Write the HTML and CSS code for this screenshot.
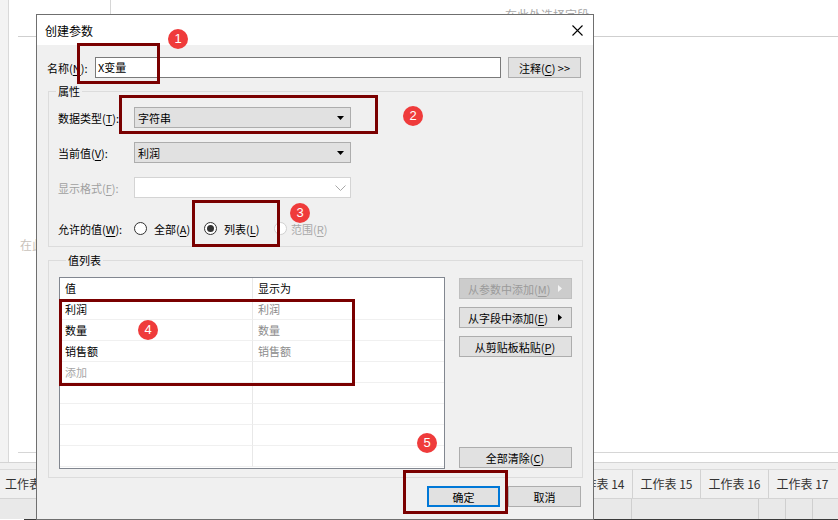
FILE: index.html
```html
<!DOCTYPE html>
<html lang="zh-CN">
<head>
  <meta charset="UTF-8">
  <title>创建参数</title>
  <link rel="stylesheet" href="styles.css">
</head>
<body>
  <div class="app">
    <div class="workspace">
      <div class="sidebar"></div>
      <div class="sheet">
        <div class="sheet-head">
          <div class="head-left"></div>
          <div class="head-right"><span class="hint">在此处选择字段</span></div>
        </div>
        <div class="sheet-body"><span class="hint">在此处放置字段</span></div>
      </div>
    </div>
    <div class="tabbar">
      <div class="tab tab-first">工作表 1</div>
      <div class="tabs-right">
        <div class="tab">工作表 14</div>
        <div class="tab">工作表 15</div>
        <div class="tab">工作表 16</div>
        <div class="tab">工作表 17</div>
      </div>
    </div>
    <div class="statusbar">
      <div class="seg seg-main"></div>
      <div class="seg seg-wide"></div>
      <div class="seg seg-small"></div>
      <div class="seg seg-small"></div>
      <div class="seg seg-last"></div>
    </div>
    <div class="screen-edge"></div>
  </div>

  <div class="dialog">
    <div class="dialog-title">
      <span>创建参数</span>
      <svg class="close" width="11" height="11" viewBox="0 0 11 11">
        <path d="M0.5 0.5L10.5 10.5M10.5 0.5L0.5 10.5" stroke="#000" stroke-width="1.1"/>
      </svg>
    </div>

    <div class="dialog-body">
      <div class="name-row">
        <label>名称(<u>N</u>):</label>
        <div class="text-input">X变量</div>
        <button class="btn note-btn">注释(<u>C</u>) &gt;&gt;</button>
      </div>

      <div class="group props">
        <div class="group-title">属性</div>
        <div class="prop-row first">
          <label>数据类型(<u>T</u>):</label>
          <div class="combo">
            <span>字符串</span>
            <svg width="7" height="4" viewBox="0 0 7 4"><path d="M0 0H7L3.5 4Z"/></svg>
          </div>
        </div>
        <div class="prop-row">
          <label>当前值(<u>V</u>):</label>
          <div class="combo">
            <span>利润</span>
            <svg width="7" height="4" viewBox="0 0 7 4"><path d="M0 0H7L3.5 4Z"/></svg>
          </div>
        </div>
        <div class="prop-row">
          <label class="disabled">显示格式(<u>F</u>):</label>
          <div class="combo combo-disabled">
            <span></span>
            <svg width="11" height="6" viewBox="0 0 11 6"><path d="M0.5 0.5L5.5 5.5L10.5 0.5" fill="none" stroke="#a8a8a8"/></svg>
          </div>
        </div>
        <div class="prop-row radios">
          <label>允许的值(<u>W</u>):</label>
          <div class="radio-opt"><span class="radio"></span><span>全部(<u>A</u>)</span></div>
          <div class="radio-opt"><span class="radio checked"></span><span>列表(<u>L</u>)</span></div>
          <div class="radio-opt disabled"><span class="radio"></span><span>范围(<u>R</u>)</span></div>
        </div>
      </div>

      <div class="group values">
        <div class="group-title">值列表</div>
        <div class="values-main">
          <div class="value-table">
            <div class="cell head">值</div><div class="cell head">显示为</div>
            <div class="cell">利润</div><div class="cell shown">利润</div>
            <div class="cell">数量</div><div class="cell shown">数量</div>
            <div class="cell">销售额</div><div class="cell shown">销售额</div>
            <div class="cell add">添加</div><div class="cell"></div>
            <div class="cell"></div><div class="cell"></div>
            <div class="cell"></div><div class="cell"></div>
            <div class="cell"></div><div class="cell"></div>
            <div class="cell"></div><div class="cell"></div>
          </div>
          <div class="side-buttons">
            <button class="btn side-btn" disabled>
              <span>从参数中添加(<u>M</u>)</span>
              <svg width="4" height="7" viewBox="0 0 4 7"><path d="M0 0L4 3.5L0 7Z" fill="#f4f4f4"/></svg>
            </button>
            <button class="btn side-btn">
              <span>从字段中添加(<u>E</u>)</span>
              <svg width="4" height="7" viewBox="0 0 4 7"><path d="M0 0L4 3.5L0 7Z"/></svg>
            </button>
            <button class="btn side-btn center">从剪贴板粘贴(<u>P</u>)</button>
            <button class="btn side-btn center clear-btn">全部清除(<u>C</u>)</button>
          </div>
        </div>
      </div>

      <div class="dialog-footer">
        <button class="btn ok-btn">确定</button>
        <button class="btn">取消</button>
      </div>
    </div>
  </div>

  <!-- annotations -->
  <div class="mark mark-1"></div>
  <div class="mark mark-2"></div>
  <div class="mark mark-3"></div>
  <div class="mark mark-4"></div>
  <div class="mark mark-5"></div>
  <div class="badge badge-1">1</div>
  <div class="badge badge-2">2</div>
  <div class="badge badge-3">3</div>
  <div class="badge badge-4">4</div>
  <div class="badge badge-5">5</div>
</body>
</html>
```

FILE: styles.css
```css
* {
  box-sizing: border-box;
}

body {
  margin: 0;
  width: 838px;
  height: 520px;
  overflow: hidden;
  position: relative;
  background: #fff;
  font-family: "Noto Sans CJK SC", sans-serif;
  font-size: 11px;
  color: #000;
}

/* background app */

.app {
  display: flex;
  flex-direction: column;
  height: 520px;
}

.workspace {
  display: flex;
  height: 462px;
}

.sidebar {
  width: 9px;
  background: #f3f3f3;
  border-right: 1px solid #d9d9d9;
}

.sheet {
  flex: 1;
  margin-left: 9px;
}

.sheet-head {
  display: flex;
  height: 37px;
  border-bottom: 1px solid #cfcfcf;
}

.head-left {
  width: 93px;
  border-right: 1px solid #d6d6d6;
}

.head-right {
  padding: 7px 0 0 394px;
}

.hint {
  font-size: 12px;
  line-height: 16px;
  color: #a8a8a8;
}

.sheet-body {
  height: 416px;
  border-bottom: 1px solid #d6d6d6;
  display: flex;
  align-items: center;
  padding-left: 2px;
}

.sheet-body .hint {
  color: #c9c2bb;
}

.tabbar {
  height: 36px;
  background: #f0f0f0;
  border-top: 1px solid #d4d4d4;
  padding-top: 6px;
  display: flex;
  font-size: 12px;
  color: #333;
}

.tab {
  width: 68px;
  height: 29px;
  line-height: 28px;
  text-align: center;
  border-top: 1px solid #dadada;
  border-left: 1px solid #d2d2d2;
}

.tab-first {
  text-align: left;
  padding-left: 5px;
  border-left: none;
}

.tabs-right {
  display: flex;
  margin-left: auto;
  margin-right: 2px;
}

.statusbar {
  display: flex;
  height: 21px;
  background: #e9e9e9;
  border-top: 1px solid #d4d4d4;
}

.seg {
  border-left: 1px solid #cfcfcf;
}

.seg-main {
  flex: 1;
  border-left: none;
}

.seg-wide {
  width: 127px;
}

.seg-small {
  width: 27px;
}

.seg-last {
  width: 26px;
}

.screen-edge {
  height: 1px;
  margin-left: 24px;
  background: #3a3a3a;
}

/* dialog */

.dialog {
  position: absolute;
  left: 36px;
  top: 14px;
  width: 558px;
  height: 506px;
  border: 1px solid #6f6f6f;
  background: #f0f0f0;
  display: flex;
  flex-direction: column;
}

.dialog-title {
  height: 30px;
  background: #fff;
  display: flex;
  align-items: center;
  justify-content: space-between;
  padding: 0 10px 0 8px;
  font-size: 12px;
}

.dialog-body {
  padding: 12px 10px 0;
}

u {
  text-decoration-thickness: 1px;
  text-underline-offset: 2px;
}

.btn {
  height: 21px;
  width: 73px;
  padding: 0;
  border: 1px solid #adadad;
  background: #e1e1e1;
  font: inherit;
  color: #000;
}

.name-row {
  display: flex;
  align-items: center;
  height: 21px;
}

.name-row label {
  width: 48px;
}

.text-input {
  width: 406px;
  height: 21px;
  border: 1px solid #7a7a7a;
  background: #fff;
  padding-left: 2px;
  line-height: 19px;
}

.note-btn {
  margin-left: 7px;
}

.group {
  border: 1px solid #dcdcdc;
  margin-left: 1px;
}

.group-title {
  margin: -9px 0 0 7px;
  padding: 0 2px;
  width: max-content;
  line-height: 16px;
  background: #f0f0f0;
}

.props {
  margin-top: 13px;
  padding-bottom: 7px;
}

.prop-row {
  display: flex;
  align-items: center;
  height: 21px;
  margin-top: 14px;
  padding-left: 9px;
}

.prop-row.first {
  margin-top: 8px;
}

.prop-row.radios {
  margin-top: 20px;
}

.prop-row label {
  width: 76px;
}

label.disabled {
  color: #a0a0a0;
}

.combo {
  width: 217px;
  height: 21px;
  border: 1px solid #adadad;
  background: #e1e1e1;
  display: flex;
  align-items: center;
  justify-content: space-between;
  padding: 0 6px 0 3px;
}

.combo-disabled {
  background: #fff;
  border-color: #d4d4d4;
  padding-right: 4px;
}

.radio-opt {
  width: 70px;
  display: flex;
  align-items: center;
  gap: 7px;
  white-space: nowrap;
}

.radio-opt.disabled {
  color: #a8a8a8;
  gap: 4px;
}

.radio {
  flex: none;
  width: 13px;
  height: 13px;
  border: 1px solid #333;
  border-radius: 50%;
  background: #fff;
  display: flex;
  align-items: center;
  justify-content: center;
}

.radio.checked::after {
  content: "";
  width: 7px;
  height: 7px;
  border-radius: 50%;
  background: #333;
}

.radio-opt.disabled .radio {
  border-color: #d0d0d0;
}

.values {
  margin-top: 13px;
  padding: 0 0 8px 10px;
}

.values-main {
  display: flex;
  margin-top: 9px;
}

.value-table {
  width: 386px;
  height: 192px;
  border: 1px solid #828790;
  background: #fff;
  display: grid;
  grid-template-columns: 193px 1fr;
  grid-auto-rows: 21px;
  align-content: start;
}

.cell {
  border-bottom: 1px solid #f0f0f0;
  padding-left: 5px;
  line-height: 20px;
}

.cell:nth-child(odd) {
  border-right: 1px solid #e8e8e8;
}

.cell.head {
  border-bottom-color: #fff;
}

.cell.shown {
  color: #8c8c8c;
}

.cell.add {
  color: #a6a6a6;
}

.side-buttons {
  width: 113px;
  margin-left: 14px;
  padding: 1px 0;
  display: flex;
  flex-direction: column;
  gap: 8px;
}

.side-btn {
  width: 113px;
  display: flex;
  align-items: center;
  justify-content: space-between;
  padding: 0 9px 0 8px;
}

.side-btn.center {
  justify-content: center;
}

.side-btn:disabled {
  background: #cccccc;
  border-color: #bfbfbf;
  color: #9a9a9a;
}

.clear-btn {
  margin-top: auto;
}

.dialog-footer {
  display: flex;
  justify-content: flex-end;
  gap: 8px;
  margin: 8px 2px 0 0;
}

.ok-btn {
  border: 2px solid #0078d7;
}

/* annotation marks */

.mark {
  position: absolute;
  border: 3px solid #7a0000;
}

.mark-1 { left: 77px;  top: 43px;  width: 83px;  height: 41px; }
.mark-2 { left: 119px; top: 95px;  width: 259px; height: 39px; }
.mark-3 { left: 192px; top: 200px; width: 88px;  height: 47px; }
.mark-4 { left: 59px;  top: 299px; width: 296px; height: 87px; }
.mark-5 { left: 403px; top: 470px; width: 105px; height: 44px; }

.badge {
  position: absolute;
  width: 20px;
  height: 20px;
  border-radius: 50%;
  background: #ef3b3b;
  color: #fff;
  font-family: "Liberation Sans", sans-serif;
  font-size: 13px;
  line-height: 20px;
  text-align: center;
}

.badge-1 { left: 168px; top: 29px; }
.badge-2 { left: 403px; top: 106px; }
.badge-3 { left: 290px; top: 203px; }
.badge-4 { left: 138px; top: 320px; }
.badge-5 { left: 417px; top: 433px; }
```
